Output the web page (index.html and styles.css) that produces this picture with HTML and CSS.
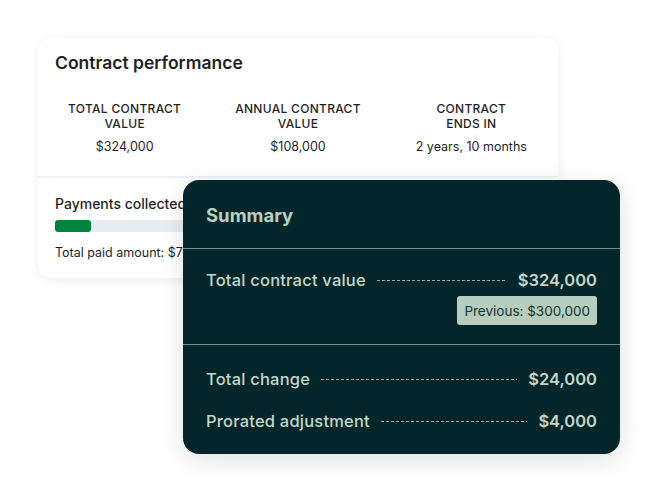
FILE: index.html
```html
<!DOCTYPE html>
<html lang="en">
<head>
  <meta charset="UTF-8" />
  <meta name="viewport" content="width=device-width, initial-scale=1.0" />
  <title>Contract performance</title>
  <link rel="stylesheet" href="styles.css">
</head>
<body>
  <div class="stage">
    <div class="perf-card">
      <h2 class="perf-title">Contract performance</h2>
      <div class="stats">
        <div class="stat">
          <div class="stat-label">Total contract<br>value</div>
          <div class="stat-value">$324,000</div>
        </div>
        <div class="stat">
          <div class="stat-label">Annual contract<br>value</div>
          <div class="stat-value">$108,000</div>
        </div>
        <div class="stat">
          <div class="stat-label">Contract<br>ends in</div>
          <div class="stat-value">2 years, 10 months</div>
        </div>
      </div>
      <div class="payments">
        <div class="payments-title">Payments collected</div>
        <div class="progress"><div class="progress-fill" style="width: 36px"></div></div>
        <div class="payments-total">Total paid amount: $72,000</div>
      </div>
    </div>

    <div class="summary">
      <h2 class="summary-title">Summary</h2>
      <div class="summary-section">
        <div class="line-item">
          <span class="item-name">Total contract value</span>
          <span class="leader"></span>
          <span class="item-amount">$324,000</span>
        </div>
        <div class="badge-row">
          <span class="badge">Previous: $300,000</span>
        </div>
      </div>
      <div class="summary-section last">
        <div class="line-item">
          <span class="item-name">Total change</span>
          <span class="leader"></span>
          <span class="item-amount">$24,000</span>
        </div>
        <div class="line-item">
          <span class="item-name">Prorated adjustment</span>
          <span class="leader"></span>
          <span class="item-amount">$4,000</span>
        </div>
      </div>
    </div>
  </div>
</body>
</html>
```

FILE: styles.css
```css
* { box-sizing: border-box; }
body {
  margin: 0;
  background: #ffffff;
  font-family: 'Inter', sans-serif;
  color: #1f1f1f;
}
.stage {
  position: relative;
  width: 657px;
  height: 492px;
  padding: 38px 0 0 38px;
}
.perf-card {
  width: 520px;
  height: 240px;
  background: #fff;
  border-radius: 14px;
  box-shadow: 0 2px 12px rgba(0, 0, 0, 0.07);
  overflow: hidden;
}
.perf-title {
  margin: 0;
  padding: 13px 17px 0;
  font-size: 17.5px;
  font-weight: 600;
  line-height: 24px;
}
.stats {
  display: grid;
  grid-template-columns: repeat(3, 1fr);
  text-align: center;
  padding: 26px 0 21px;
  border-bottom: 2px solid #eef1f5;
}
.stat-label {
  font-size: 12px;
  font-weight: 500;
  text-transform: uppercase;
  line-height: 15px;
  letter-spacing: 0.3px;
}
.stat-value {
  margin-top: 8px;
  font-size: 12.5px;
  line-height: 16px;
}
.payments {
  padding: 16px 17px 0;
}
.payments-title {
  font-size: 14px;
  font-weight: 500;
  line-height: 20px;
}
.progress {
  margin-top: 6px;
  height: 12px;
  background: #e8edf3;
  border-radius: 3px;
}
.progress-fill {
  height: 100%;
  background: #00843d;
  border-radius: 3px;
}
.payments-total {
  margin-top: 12px;
  font-size: 12.5px;
  line-height: 18px;
}

/* dark summary panel sits on top of the performance card */
.summary {
  position: absolute;
  left: 183px;
  top: 180px;
  width: 437px;
  height: 274px;
  background: #03262a;
  border-radius: 16px;
  box-shadow: 0 6px 24px rgba(0, 0, 0, 0.12);
  color: #c3d6c9;
}
.summary-title {
  margin: 0;
  padding: 22px 23px 0;
  height: 69px;
  font-size: 18.5px;
  font-weight: 700;
  line-height: 26px;
  color: #b9cfc0;
  border-bottom: 1px solid #6f8e85;
}
.summary-section {
  padding: 19px 23px 19px;
  border-bottom: 1px solid #6f8e85;
}
.summary-section.last {
  border-bottom: none;
  padding-top: 22px;
}
.line-item {
  display: flex;
  align-items: center;
  height: 24px;
  font-size: 16.5px;
  font-weight: 500;
  letter-spacing: 0.2px;
}
.line-item + .line-item {
  margin-top: 18px;
}
.leader {
  flex: 1;
  height: 1px;
  margin: 1px 11px 0;
  background: repeating-linear-gradient(to right, #93ada2 0 3px, transparent 3px 5px);
}
.item-amount {
  font-size: 16.5px;
  font-weight: 600;
  letter-spacing: 0;
}
.badge-row {
  display: flex;
  justify-content: flex-end;
  margin-top: 4px;
}
.badge {
  background: #b7cdbd;
  color: #123530;
  font-size: 13.5px;
  line-height: 20px;
  padding: 5px 7px 4px;
  border-radius: 3px;
}
```
